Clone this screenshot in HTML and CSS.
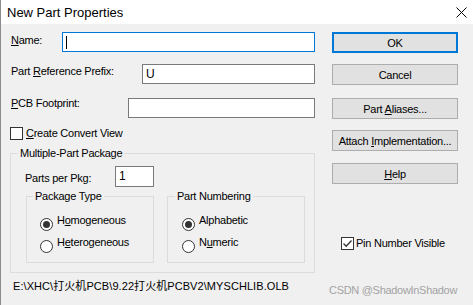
FILE: index.html
```html
<!DOCTYPE html>
<html lang="en">
<head>
    <meta charset="UTF-8">
    <meta name="viewport" content="width=device-width, initial-scale=1.0">
    <title>New Part Properties</title>
    <link rel="stylesheet" href="styles.css">
</head>
<body>
    <div class="dialog">
        <div class="titlebar">
            <span class="title">New Part Properties</span>
            <svg class="close" width="11" height="11" viewBox="0 0 11 11">
                <path d="M0.5 0.5 L10.5 10.5 M10.5 0.5 L0.5 10.5" stroke="#000" stroke-width="1" fill="none"/>
            </svg>
        </div>

        <div class="content">
            <div class="form">
                <div class="row">
                    <label class="lbl lbl-name"><u>N</u>ame:</label>
                    <div class="field field-focus"><span class="caret"></span></div>
                </div>
                <div class="row row-prefix">
                    <label class="lbl lbl-prefix">Part <u>R</u>eference Prefix:</label>
                    <div class="field">U</div>
                </div>
                <div class="row row-pcb">
                    <label class="lbl lbl-pcb"><u>P</u>CB Footprint:</label>
                    <div class="field"></div>
                </div>

                <div class="check-row convert">
                    <span class="checkbox"></span>
                    <span class="check-label"><u>C</u>reate Convert View</span>
                </div>

                <fieldset class="group group-multi">
                    <legend>Multiple-Part Package</legend>
                    <div class="pkg-row">
                        <span class="pkg-label">Parts per Pkg:</span>
                        <div class="field field-small">1</div>
                    </div>
                    <div class="subgroups">
                        <fieldset class="group group-type">
                            <legend>Package Type</legend>
                            <div class="radio-row first">
                                <span class="radio checked"></span>
                                <span>H<u>o</u>mogeneous</span>
                            </div>
                            <div class="radio-row">
                                <span class="radio"></span>
                                <span>H<u>e</u>terogeneous</span>
                            </div>
                        </fieldset>
                        <fieldset class="group group-num">
                            <legend>Part Numbering</legend>
                            <div class="radio-row first">
                                <span class="radio checked"></span>
                                <span>Alphabetic</span>
                            </div>
                            <div class="radio-row">
                                <span class="radio"></span>
                                <span>N<u>u</u>meric</span>
                            </div>
                        </fieldset>
                    </div>
                </fieldset>

                <div class="path">E:\XHC\打火机PCB\9.22打火机PCBV2\MYSCHLIB.OLB</div>
            </div>

            <div class="buttons">
                <button class="btn btn-default">OK</button>
                <button class="btn">Cancel</button>
                <button class="btn btn-aliases">Part <u>A</u>liases...</button>
                <button class="btn">Attach <u>I</u>mplementation...</button>
                <button class="btn btn-help"><u>H</u>elp</button>

                <div class="check-row pin">
                    <span class="checkbox">
                        <svg width="11" height="11" viewBox="0 0 11 11">
                            <path d="M1.5 5.5 L4.2 8.2 L9.5 2.5" stroke="#333" stroke-width="1.3" fill="none"/>
                        </svg>
                    </span>
                    <span class="check-label">Pin Number Visible</span>
                </div>
            </div>
        </div>

        <div class="watermark">CSDN @ShadowInShadow</div>
    </div>
</body>
</html>
```

FILE: styles.css
```css
* {
    box-sizing: border-box;
    margin: 0;
    padding: 0;
}

body {
    background-color: #f0f0f0;
    font-family: "Liberation Sans", "Noto Sans CJK SC", sans-serif;
    font-size: 11px;
    letter-spacing: -0.25px;
    color: #000;
}

u {
    text-decoration: underline;
    text-underline-offset: 1px;
}

.dialog {
    position: relative;
    width: 473px;
    height: 305px;
    border-left: 1px solid #8c8c8c;
    overflow: hidden;
}

.titlebar {
    height: 24px;
    background-color: #fff;
    display: flex;
    align-items: center;
    justify-content: space-between;
    padding: 0 6px;
}

.title {
    font-size: 13px;
    letter-spacing: 0;
}

.content {
    display: flex;
    padding: 8px 0 0 9px;
}

/* left side */

.form {
    width: 305px;
}

.row {
    display: flex;
    align-items: flex-start;
    height: 20px;
}

.row-prefix {
    margin-top: 12px;
}

.row-pcb {
    margin-top: 14px;
}

.lbl {
    line-height: 13px;
    padding-left: 1px;
    padding-top: 2px;
}

.lbl-name {
    width: 52px;
}

.lbl-prefix {
    width: 132px;
    padding-top: 1px;
}

.lbl-pcb {
    width: 118px;
    padding-top: 0;
    margin-top: -1px;
}

.field {
    flex: 1;
    height: 20px;
    background-color: #fff;
    border: 1px solid #7a7a7a;
    padding: 0 3px;
    line-height: 18px;
    font-size: 12px;
}

.field-focus {
    border-color: #0078d7;
}

.caret {
    display: inline-block;
    width: 1px;
    height: 13px;
    margin-top: 3px;
    vertical-align: top;
    background-color: #000;
}

.check-row {
    display: flex;
    align-items: flex-start;
    line-height: 13px;
}

.convert {
    margin-top: 9px;
}

.checkbox {
    width: 13px;
    height: 13px;
    border: 1px solid #333;
    background-color: #fff;
    display: flex;
}

.check-label {
    margin-left: 3px;
}

.group {
    border: 1px solid #dcdcdc;
    padding: 0;
}

.group legend {
    line-height: 13px;
    padding: 0 2px;
    margin-left: 7px;
}

.group-multi {
    margin-top: 7px;
    height: 126px;
}

.pkg-row {
    display: flex;
    align-items: flex-start;
    margin-top: 6px;
    padding-left: 14px;
}

.pkg-label {
    width: 90px;
    line-height: 13px;
    margin-top: 6px;
}

.field-small {
    flex: none;
    width: 39px;
    height: 21px;
    line-height: 19px;
}

.subgroups {
    display: flex;
    gap: 13px;
    margin: 3px 0 0 15px;
}

.group-type {
    width: 128px;
    height: 73px;
    padding-left: 13px;
}

.group-num {
    width: 138px;
    height: 73px;
    padding-left: 14px;
}

.group-type legend,
.group-num legend {
    margin-left: -7px;
}

.radio-row {
    display: flex;
    align-items: flex-start;
    line-height: 13px;
    margin-top: 5px;
}

.radio-row.first {
    margin-top: 11px;
}

.radio {
    width: 13px;
    height: 13px;
    margin: 4px 4px 0 0;
    border: 1px solid #333;
    border-radius: 50%;
    background-color: #fff;
    display: flex;
    align-items: center;
    justify-content: center;
}

.radio.checked::after {
    content: "";
    width: 7px;
    height: 7px;
    border-radius: 50%;
    background-color: #333;
}

.path {
    margin-top: 7px;
    padding-left: 3px;
    line-height: 13px;
    letter-spacing: 0.07px;
}

/* right side */

.buttons {
    width: 126px;
    margin-left: 17px;
    display: flex;
    flex-direction: column;
}

.btn {
    height: 21px;
    background-color: #e1e1e1;
    border: 1px solid #adadad;
    font-family: inherit;
    font-size: 11px;
    letter-spacing: -0.25px;
    color: #000;
}

.btn + .btn {
    margin-top: 11px;
}

.btn-default {
    border: 2px solid #0078d7;
}

.btn + .btn-aliases {
    margin-top: 13px;
}

.btn + .btn-help {
    margin-top: 12px;
}

.pin {
    margin: 53px 0 0 9px;
}

.pin .check-label {
    margin-left: 2px;
}

.watermark {
    position: absolute;
    left: 328px;
    top: 284px;
    font-size: 11px;
    letter-spacing: -0.3px;
    color: #a3a3a3;
}
```
